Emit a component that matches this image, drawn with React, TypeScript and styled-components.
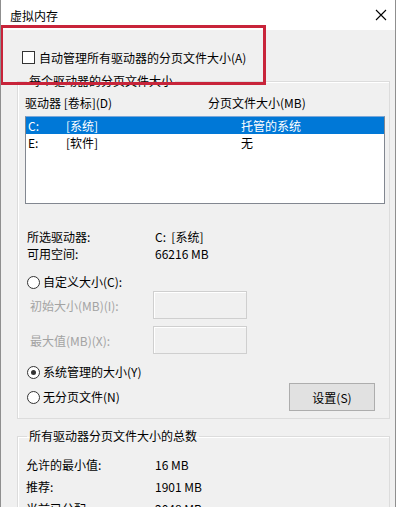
import React from "react";
import styled, { createGlobalStyle } from "styled-components";

const Global = createGlobalStyle`
  html, body { margin: 0; padding: 0; background: #ffffff; }
  body { font-family: "Noto Sans CJK SC", "Noto Sans", sans-serif; font-size: 12px; color: #000; }
`;

const Window = styled.div`
  position: relative;
  width: 394px;
  height: 507px;
  overflow: hidden;
  border-left: 1px solid #8f8f8f;
  border-right: 1px solid #8f8f8f;
  background: #f0f0f0;
  display: flex;
  flex-direction: column;
`;

const TitleBar = styled.div`
  height: 30px;
  flex: none;
  background: #ffffff;
  display: flex;
  align-items: center;
  justify-content: space-between;
  padding: 0 8px 0 9px;
  box-sizing: border-box;
  font-size: 12px;
`;

const Body = styled.div`
  display: flex;
  flex-direction: column;
  padding: 0 5px 0 16px;
`;

const Highlight = styled.div`
  position: absolute;
  left: -1px;
  top: 25px;
  width: 266px;
  height: 60px;
  box-sizing: border-box;
  border: 3px solid #c8243a;
  pointer-events: none;
`;

const CheckRow = styled.label`
  display: flex;
  align-items: center;
  gap: 4px;
  height: 14px;
  margin: 20px 0 0 5px;
`;

const CheckBox = styled.span`
  width: 11px;
  height: 11px;
  border: 1px solid #333;
  background: #fff;
  flex: none;
`;

const Group = styled.fieldset<{ $pb?: number }>`
  margin: 9px 0 0 0;
  padding: 0 4px ${(p) => p.$pb ?? 7}px 7px;
  border: 1px solid #dcdcdc;
  box-shadow: inset 1px 1px 0 #ffffff;
  min-width: 0;
  display: flex;
  flex-direction: column;
`;

const Legend = styled.legend`
  padding: 0 2px;
  margin-left: 2px;
  line-height: 16px;
  font-size: 12px;
`;

const HeaderRow = styled.div`
  display: flex;
  line-height: 16px;
  margin-top: 6px;
`;

const HeaderCell = styled.span<{ $w?: number }>`
  width: ${(p) => (p.$w ? `${p.$w}px` : "auto")};
  flex: none;
`;

const ListBox = styled.div`
  margin-top: 5px;
  height: 88px;
  box-sizing: border-box;
  border: 1px solid #828790;
  border-top-color: #7aa7d8;
  background: #ffffff;
  padding: 0;
`;

const ListRow = styled.div<{ $sel?: boolean }>`
  display: flex;
  height: 17px;
  line-height: 17px;
  padding-left: 2px;
  background: ${(p) => (p.$sel ? "#0078d7" : "transparent")};
  color: ${(p) => (p.$sel ? "#ffffff" : "#000000")};
`;

const Cell = styled.span<{ $w?: number }>`
  width: ${(p) => (p.$w ? `${p.$w}px` : "auto")};
  flex: none;
`;

const InfoRow = styled.div<{ $mt: number; $pl?: number }>`
  display: flex;
  line-height: 16px;
  margin-top: ${(p) => p.$mt}px;
  padding-left: ${(p) => p.$pl ?? 2}px;
`;

const InfoLabel = styled.span<{ $w?: number }>`
  width: ${(p) => p.$w ?? 128}px;
  flex: none;
`;

const RadioRow = styled.div<{ $mt: number }>`
  display: flex;
  align-items: center;
  justify-content: space-between;
  margin-top: ${(p) => p.$mt}px;
  padding: 0 10px 0 2px;
`;

const RadioLabel = styled.label`
  display: flex;
  align-items: center;
  gap: 3px;
  line-height: 16px;
`;

const Radio = styled.span<{ $on?: boolean }>`
  width: 11px;
  height: 11px;
  border: 1px solid #333;
  border-radius: 50%;
  background: #fff;
  flex: none;
  display: flex;
  align-items: center;
  justify-content: center;
  &::after {
    content: "";
    width: 5px;
    height: 5px;
    border-radius: 50%;
    background: ${(p) => (p.$on ? "#333" : "transparent")};
  }
`;

const FieldRow = styled.div<{ $mt: number }>`
  display: flex;
  align-items: center;
  margin-top: ${(p) => p.$mt}px;
  padding-left: 5px;
  height: 28px;
`;

const DisabledLabel = styled.span`
  width: 123px;
  flex: none;
  color: #a3a3a3;
`;

const TextBox = styled.div`
  width: 94px;
  height: 28px;
  box-sizing: border-box;
  border: 1px solid #cfcfcf;
  box-shadow: inset 1px 1px 0 #ffffff;
  background: #f0f0f0;
`;

const Button = styled.button`
  width: 86px;
  height: 28px;
  box-sizing: border-box;
  border: 1px solid #adadad;
  background: #e1e1e1;
  font-family: inherit;
  font-size: 12px;
  color: #000;
  padding: 0;
`;

const CloseIcon = () => (
  <svg width="12" height="12" viewBox="0 0 12 12">
    <path d="M1 1 L11 11 M11 1 L1 11" stroke="#000" strokeWidth="1.1" fill="none" />
  </svg>
);

export default function App() {
  return (
    <>
      <Global />
      <Window>
        <TitleBar>
          <span>虚拟内存</span>
          <CloseIcon />
        </TitleBar>
        <Body>
          <CheckRow>
            <CheckBox />
            <span>自动管理所有驱动器的分页文件大小(A)</span>
          </CheckRow>
          <Group $pb={7}>
            <Legend>每个驱动器的分页文件大小</Legend>
            <HeaderRow>
              <HeaderCell $w={183}>驱动器 [卷标](D)</HeaderCell>
              <HeaderCell>分页文件大小(MB)</HeaderCell>
            </HeaderRow>
            <ListBox>
              <ListRow $sel>
                <Cell $w={38}>C:</Cell>
                <Cell $w={175}>[系统]</Cell>
                <Cell>托管的系统</Cell>
              </ListRow>
              <ListRow>
                <Cell $w={38}>E:</Cell>
                <Cell $w={175}>[软件]</Cell>
                <Cell>无</Cell>
              </ListRow>
            </ListBox>
            <InfoRow $mt={25}>
              <InfoLabel>所选驱动器:</InfoLabel>
              <span>C:&nbsp;&nbsp;[系统]</span>
            </InfoRow>
            <InfoRow $mt={1}>
              <InfoLabel>可用空间:</InfoLabel>
              <span>66216 MB</span>
            </InfoRow>
            <RadioRow $mt={12}>
              <RadioLabel>
                <Radio />
                自定义大小(C):
              </RadioLabel>
            </RadioRow>
            <FieldRow $mt={1}>
              <DisabledLabel>初始大小(MB)(I):</DisabledLabel>
              <TextBox />
            </FieldRow>
            <FieldRow $mt={7}>
              <DisabledLabel>最大值(MB)(X):</DisabledLabel>
              <TextBox />
            </FieldRow>
            <RadioRow $mt={10}>
              <RadioLabel>
                <Radio $on />
                系统管理的大小(Y)
              </RadioLabel>
            </RadioRow>
            <RadioRow $mt={3}>
              <RadioLabel>
                <Radio />
                无分页文件(N)
              </RadioLabel>
              <Button>设置(S)</Button>
            </RadioRow>
          </Group>
          <Group $pb={20}>
            <Legend>所有驱动器分页文件大小的总数</Legend>
            <InfoRow $mt={13} $pl={1}>
              <InfoLabel $w={129}>允许的最小值:</InfoLabel>
              <span>16 MB</span>
            </InfoRow>
            <InfoRow $mt={6} $pl={1}>
              <InfoLabel $w={129}>推荐:</InfoLabel>
              <span>1901 MB</span>
            </InfoRow>
            <InfoRow $mt={6} $pl={1}>
              <InfoLabel $w={129}>当前已分配:</InfoLabel>
              <span>2048 MB</span>
            </InfoRow>
          </Group>
        </Body>
        <Highlight />
      </Window>
    </>
  );
}
